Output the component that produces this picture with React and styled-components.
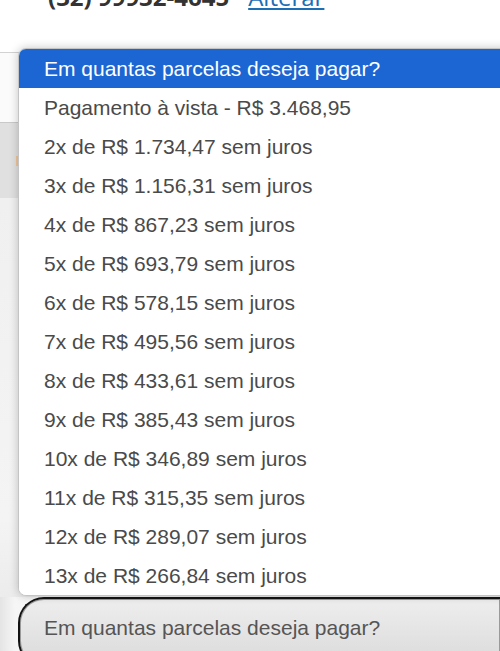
import React from "react";
import styled, { createGlobalStyle } from "styled-components";

const Global = createGlobalStyle`
  html, body { margin: 0; padding: 0; background: #fff; }
  body { overflow: hidden; }
  * { box-sizing: border-box; }
`;

const Page = styled.div`
  position: relative;
  width: 500px;
  height: 651px;
  overflow: hidden;
  background: #fff;
  font-family: "Liberation Sans", Arial, sans-serif;
`;

const PhoneRow = styled.div`
  display: flex;
  align-items: baseline;
  gap: 19px;
  margin-top: -16px;
  padding-left: 48px;
  height: 26px;
  line-height: 26px;
  font-family: "Open Sans", "Liberation Sans", sans-serif;
`;

const Phone = styled.span`
  font-size: 24px;
  font-weight: 700;
  color: #333;
`;

const ChangeLink = styled.a`
  font-size: 24px;
  color: #1a6fb5;
  text-decoration: underline;
`;

const Card = styled.div`
  margin-top: 42px;
  border-top: 1px solid #d2d2d2;
  display: flex;
  flex-direction: column;
`;

const Spacer = styled.div`
  flex-shrink: 0;
  height: 69px;
  background: #fbfbfb;
`;

const Band = styled.div`
  flex-shrink: 0;
  height: 76px;
  border-top: 1px solid #c9c9c9;
  background: #e0e0e0;
  display: flex;
  align-items: center;
  padding-left: 16px;
`;

const Speck = styled.span`
  width: 3px;
  height: 10px;
  background: #f2c79a;
`;

const Filler = styled.div`
  flex-shrink: 0;
  height: 399px;
  background: linear-gradient(#f0f0f0, #f4f4f4 80%, #ececec);
`;

const SelectWrap = styled.div`
  flex-shrink: 0;
  background: linear-gradient(90deg, #e4e4e4, #f6f6f6 15px);
  padding-left: 18px;
`;

const SelectBox = styled.div`
  height: 70px;
  border: 2px solid #141414;
  border-right: none;
  border-radius: 26px 0 0 26px;
  background: linear-gradient(#eeeeee, #dadada);
  padding-left: 24px;
  padding-top: 17px;
  font-size: 21px;
  color: #555;
  box-shadow: inset 0 0 0 1px #9a9a9a;
`;

const Dropdown = styled.ul`
  position: absolute;
  top: 48px;
  left: 18px;
  width: 500px;
  margin: 0;
  padding: 0;
  list-style: none;
  background: #fff;
  border: 1px solid #c4c4c4;
  border-radius: 8px;
  overflow: hidden;
  box-shadow: 0 0 10px rgba(0, 0, 0, 0.22);
`;

const Option = styled.li`
  height: 39px;
  display: flex;
  align-items: center;
  padding-left: 25px;
  font-size: 21px;
  color: ${(p) => (p.$selected ? "#fff" : "#4a4a4a")};
  background: ${(p) => (p.$selected ? "#1b66d2" : "#fff")};
  white-space: nowrap;
`;

const options = [
  "Pagamento à vista - R$ 3.468,95",
  "2x de R$ 1.734,47 sem juros",
  "3x de R$ 1.156,31 sem juros",
  "4x de R$ 867,23 sem juros",
  "5x de R$ 693,79 sem juros",
  "6x de R$ 578,15 sem juros",
  "7x de R$ 495,56 sem juros",
  "8x de R$ 433,61 sem juros",
  "9x de R$ 385,43 sem juros",
  "10x de R$ 346,89 sem juros",
  "11x de R$ 315,35 sem juros",
  "12x de R$ 289,07 sem juros",
  "13x de R$ 266,84 sem juros",
];

export default function App() {
  return (
    <Page>
      <Global />
      <PhoneRow>
        <Phone>(32) 99932-4645</Phone>
        <ChangeLink href="#">Alterar</ChangeLink>
      </PhoneRow>
      <Card>
        <Spacer />
        <Band>
          <Speck />
        </Band>
        <Filler />
        <SelectWrap>
          <SelectBox>Em quantas parcelas deseja pagar?</SelectBox>
        </SelectWrap>
      </Card>
      <Dropdown>
        <Option $selected>Em quantas parcelas deseja pagar?</Option>
        {options.map((o) => (
          <Option key={o}>{o}</Option>
        ))}
      </Dropdown>
    </Page>
  );
}
